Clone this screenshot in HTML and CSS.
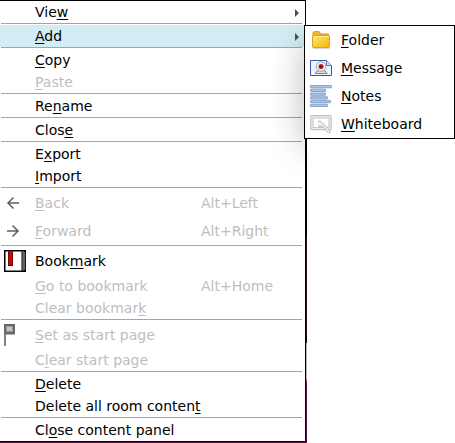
FILE: index.html
```
<!DOCTYPE html>
<html lang="en">
<head>
<meta charset="utf-8">
<title>Menu</title>
<link rel="stylesheet" href="styles.css">
</head>
<body>
<div class="backdrop">
<nav class="menu">
  <div class="item"><span>Vie<u>w</u></span><i class="arrow"></i></div>
  <hr>
  <div class="item active"><span><u>A</u>dd</span><i class="arrow"></i></div>
  <hr>
  <div class="item"><span><u>C</u>opy</span></div>
  <div class="item off"><span><u>P</u>aste</span></div>
  <hr>
  <div class="item"><span>Re<u>n</u>ame</span></div>
  <hr>
  <div class="item"><span>Clos<u>e</u></span></div>
  <hr>
  <div class="item"><span>E<u>x</u>port</span></div>
  <div class="item"><span><u>I</u>mport</span></div>
  <hr>
  <div class="item tall off">
    <svg class="icon" viewBox="0 0 22 22"><path d="M15 11H4.500M9.500 5.500 4 11l5.500 5.500" fill="none" stroke="#606060" stroke-width="1.500"/></svg>
    <span><u>B</u>ack</span><kbd>Alt+Left</kbd></div>
  <div class="item tall off">
    <svg class="icon" viewBox="0 0 22 22"><path d="M3 11h10.500M8.500 5.500 14 11l-5.500 5.500" fill="none" stroke="#606060" stroke-width="1.500"/></svg>
    <span><u>F</u>orward</span><kbd>Alt+Right</kbd></div>
  <hr>
  <div class="item tall">
    <svg class="icon" viewBox="0 0 22 22"><rect width="22" height="22" fill="#000"/><rect x="1.500" y="1.500" width="16" height="19" fill="#fff"/><rect x="18.600" y="1" width="1" height="19.500" fill="#aaa"/><rect x="20" y="2" width="1.200" height="18" fill="#666"/><rect x="4" y="1" width="5" height="15" fill="#111"/><rect x="4.500" y="1" width="4" height="14.500" fill="#d90000"/></svg>
    <span>Book<u>m</u>ark</span></div>
  <div class="item off"><span><u>G</u>o to bookmark</span><kbd>Alt+Home</kbd></div>
  <div class="item off"><span>Clear bookmar<u>k</u></span></div>
  <hr>
  <div class="item tall off">
    <svg class="icon" viewBox="0 0 22 22"><rect y="0" width="11" height="10.500" fill="#686868"/><rect y="10" width="2" height="12" fill="#828282"/><rect x="2" y="2" width="7" height="6" fill="#989898"/><rect x="3" y="3" width="5" height="4" fill="#c4c4c4"/></svg>
    <span><u>S</u>et as start page</span></div>
  <div class="item off"><span>C<u>l</u>ear start page</span></div>
  <hr>
  <div class="item"><span><u>D</u>elete</span></div>
  <div class="item"><span>Delete all room conten<u>t</u></span></div>
  <hr>
  <div class="item"><span>Cl<u>o</u>se content panel</span></div>
  <div class="shade"></div>
</nav>
</div>
<nav class="submenu">
  <div class="item tall">
    <svg class="icon" viewBox="0 0 22 22"><defs><linearGradient id="gold" x2="1" y2="1"><stop stop-color="#ffe77a"/><stop offset="1" stop-color="#f7b500"/></linearGradient></defs><path d="M3 18.500V4q0-1.500 1.500-1.500h4Q10 2.500 10 4v1h8.500v13.500z" fill="#f0b92b" stroke="#d39a1c"/><rect x="2.500" y="6.500" width="17" height="12" rx="1.300" fill="url(#gold)" stroke="#dba21c"/><path d="M3.500 7.500h15" stroke="#fff0a0"/><path d="M3 19.500h16.500" stroke="#bbb" opacity=".6"/></svg>
    <span><u>F</u>older</span></div>
  <div class="item tall">
    <svg class="icon" viewBox="0 0 22 22"><path d="M.5 3.500h16l5 5v10H.5z" fill="#edf5fd" stroke="#3853b5"/><path d="M16.500 3.500v5h5" fill="#d2e0f5" stroke="#5a75c6"/><path d="M5.500 16.500q0-3 5.500-3t6 3z" fill="#ddd" stroke="#858585"/><circle cx="11" cy="9.500" r="4.800" fill="#eee" stroke="#a6a6a6"/><circle cx="11" cy="9.500" r="2.500" fill="#b51f24"/><circle cx="11.200" cy="9.700" r="1.100" fill="#54191d"/></svg>
    <span><u>M</u>essage</span></div>
  <div class="item tall">
    <svg class="icon" viewBox="0 0 22 22"><g fill="#a9c8eb" stroke="#7293bd" stroke-width=".8"><rect x=".5" y=".5" width="21" height="2.300" rx=".5"/><rect x=".5" y="4.200" width="15" height="2.300" rx=".5"/><rect x=".5" y="8" width="15" height="2.300" rx=".5"/><rect x=".5" y="11.700" width="17" height="2.300" rx=".5"/><rect x=".5" y="15.400" width="20" height="2.300" rx=".5"/><rect x=".5" y="19.200" width="17" height="2.300" rx=".5"/></g></svg>
    <span><u>N</u>otes</span></div>
  <div class="item tall">
    <svg class="icon" viewBox="0 0 22 22"><rect x=".7" y="2.700" width="20.500" height="14" rx="1" fill="#eee" stroke="#c3c3c3" stroke-width="1.200"/><rect x="3" y="5" width="16" height="9.500" fill="#fff" stroke="#c6c6c6"/><path d="M8 8.500q3-1.500 4 1l6.500 6.500q2.500 2 1.500 3.500-1.500.8-3-1l-5-6q-2 2-3.500.5" fill="#f0f0f0" stroke="#b5b5b5"/></svg>
    <span><u>W</u>hiteboard</span></div>
</nav>
</body>
</html>
```
FILE: styles.css
```
* { box-sizing: border-box; }
body {
  margin: 0;
  background: #fff;
  color: #000;
  font: 14px/22px "DejaVu Sans", sans-serif;
  overflow: hidden;
}
.backdrop {
  width: 307px;
  height: 443px;
  background:
    linear-gradient(#5a1648, #5a1648) 0 100% / 306px 1px no-repeat,
    linear-gradient(#fff 25px, #000 25px 235px, #24100f 235px 343px, #b5b5b5 343px 379px, #d9641e 379px 381px, #5a1648 381px);
}
.menu {
  position: relative;
  overflow: hidden;
  width: 306px;
  height: 442px;
  background: #fff;
  border: solid #000;
  border-width: 1px 1px 1px 0;
}
.item {
  display: flex;
  align-items: center;
  height: 22px;
  padding-left: 35px;
  white-space: pre;
}
.item span, kbd { padding-top: 1px; line-height: 21px; }
.tall { height: 28px; }
.active { background: #d2eef4; }
.off { color: #bebebe; }
hr {
  height: 1px;
  margin: 0 3px 1px 1px;
  border: 0;
  background: #a5a5a5;
}
u {
  text-decoration: underline 1px;
  text-underline-offset: 2px;
  text-decoration-skip-ink: none;
}
.icon {
  flex: none;
  width: 22px;
  height: 22px;
  margin: 0 9px 0 -31px;
}
kbd {
  font-family: inherit;
  font-size: inherit;
  width: 104px;
  margin-left: auto;
}
.arrow {
  margin: 1px 6px 0 auto;
  border: solid transparent;
  border-width: 4px 0 4px 4px;
  border-left-color: #505050;
}
.shade {
  position: absolute;
  left: 309px;
  top: 44px;
  width: 120px;
  height: 98px;
  box-shadow: 0 0 36px 3px rgba(0, 0, 0, .3);
}
.submenu {
  position: absolute;
  left: 304px;
  top: 25px;
  width: 151px;
  height: 114px;
  background: #fff;
  border: 1px solid #000;
}
.submenu .item { padding-left: 36px; }
```
